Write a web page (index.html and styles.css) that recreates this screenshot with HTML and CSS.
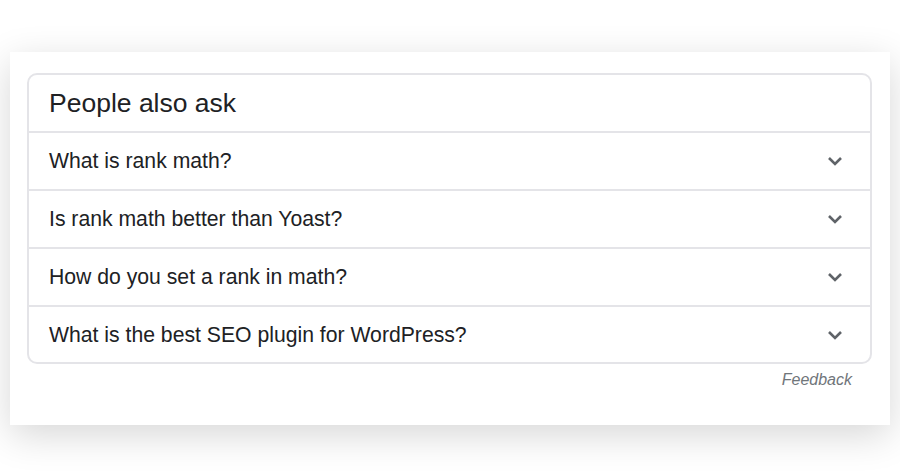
FILE: index.html
```html
<!DOCTYPE html>
<html lang="en">
<head>
    <meta charset="UTF-8">
    <meta name="viewport" content="width=device-width, initial-scale=1.0">
    <title>People also ask</title>
    <link rel="stylesheet" href="styles.css">
</head>
<body>
    <div class="panel">
        <div class="paa-card">
            <h2 class="paa-title">People also ask</h2>
            <div class="paa-row">
                <span>What is rank math?</span>
                <svg class="chevron" viewBox="0 0 16 10" width="16" height="10"><path d="M2 2 L8 8 L14 2" /></svg>
            </div>
            <div class="paa-row">
                <span>Is rank math better than Yoast?</span>
                <svg class="chevron" viewBox="0 0 16 10" width="16" height="10"><path d="M2 2 L8 8 L14 2" /></svg>
            </div>
            <div class="paa-row">
                <span>How do you set a rank in math?</span>
                <svg class="chevron" viewBox="0 0 16 10" width="16" height="10"><path d="M2 2 L8 8 L14 2" /></svg>
            </div>
            <div class="paa-row">
                <span>What is the best SEO plugin for WordPress?</span>
                <svg class="chevron" viewBox="0 0 16 10" width="16" height="10"><path d="M2 2 L8 8 L14 2" /></svg>
            </div>
        </div>
        <div class="feedback">Feedback</div>
    </div>
</body>
</html>
```

FILE: styles.css
```css
html {
    background-color: #fff;
}

body {
    font-family: "Liberation Sans", Arial, sans-serif;
    margin: 0;
    padding: 52px 10px 49px;
    color: #202124;
}

.panel {
    background-color: #fff;
    padding: 21px 18px 0 17px;
    height: 352px;
    box-shadow: 0 10px 36px rgba(0, 0, 0, 0.16);
}

.paa-card {
    border: 2px solid #e4e4e8;
    border-radius: 10px;
}

.paa-title {
    margin: 0;
    height: 56px;
    line-height: 56px;
    padding-left: 20px;
    font-size: 26.5px;
    font-weight: normal;
}

.paa-row {
    display: flex;
    align-items: center;
    justify-content: space-between;
    height: 56px;
    padding: 0 27px 0 20px;
    border-top: 2px solid #e4e4e8;
    font-size: 21.2px;
}

.paa-row:last-child {
    height: 55px;
}

.chevron {
    fill: none;
    stroke: #5f6368;
    stroke-width: 2.6;
}

.feedback {
    text-align: right;
    padding-right: 20px;
    margin-top: 7px;
    font-size: 16px;
    font-style: italic;
    color: #70757a;
}
```
